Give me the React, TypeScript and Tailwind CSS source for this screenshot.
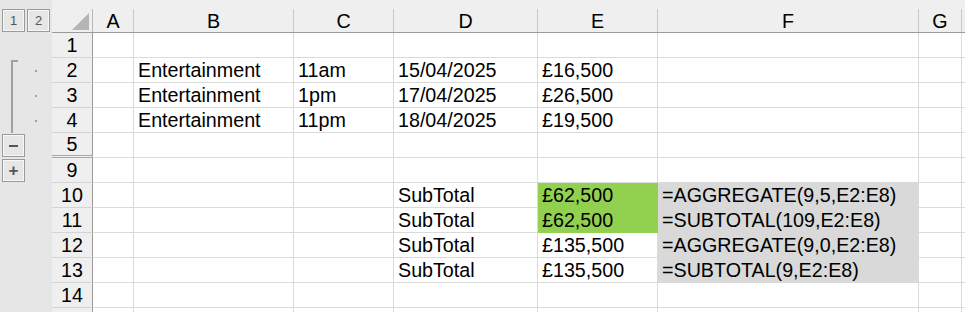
import React from 'react';

type Col = { key: string; w: string };

const cols: Col[] = [
    { key: 'A', w: 'w-[41px]' },
    { key: 'B', w: 'w-[160px]' },
    { key: 'C', w: 'w-[100px]' },
    { key: 'D', w: 'w-[144px]' },
    { key: 'E', w: 'w-[120px]' },
    { key: 'F', w: 'w-[261px]' },
    { key: 'G', w: 'w-[43px]' },
];

type Row = {
    n: number;
    cells?: Record<string, string>;
    fill?: Record<string, string>;
    outline?: 'first' | 'mid' | 'minus' | 'plus';
    hiddenBelow?: boolean;
    label?: boolean;
};

const GREEN = 'bg-[#92d050] border-[#92d050]';
const GREY = 'bg-[#d9d9d9] border-[#d9d9d9]';

const rows: Row[] = [
    { n: 1 },
    { n: 2, outline: 'first', cells: { B: 'Entertainment', C: '11am', D: '15/04/2025', E: '£16,500' } },
    { n: 3, outline: 'mid', cells: { B: 'Entertainment', C: '1pm', D: '17/04/2025', E: '£26,500' } },
    { n: 4, outline: 'mid', cells: { B: 'Entertainment', C: '11pm', D: '18/04/2025', E: '£19,500' } },
    { n: 5, outline: 'minus', hiddenBelow: true },
    { n: 9, outline: 'plus' },
    { n: 10, cells: { D: 'SubTotal', E: '£62,500', F: '=AGGREGATE(9,5,E2:E8)' }, fill: { E: GREEN, F: GREY } },
    { n: 11, cells: { D: 'SubTotal', E: '£62,500', F: '=SUBTOTAL(109,E2:E8)' }, fill: { E: GREEN, F: GREY } },
    { n: 12, cells: { D: 'SubTotal', E: '£135,500', F: '=AGGREGATE(9,0,E2:E8)' }, fill: { F: GREY } },
    { n: 13, cells: { D: 'SubTotal', E: '£135,500', F: '=SUBTOTAL(9,E2:E8)' }, fill: { F: GREY } },
    { n: 14 },
    // only the top edge of row 15 is in view
    { n: 15, label: false },
];

const LevelButton = ({ children }: { children: React.ReactNode }) => (
    <div className="w-[23px] h-[23px] flex items-center justify-center border border-[#9a9a9a] shadow-[inset_0_0_0_1px_#f7f7f7] text-[13px] text-[#555] leading-none">
        {children}
    </div>
);

const Outline = ({ kind }: { kind?: Row['outline'] }) => {
    if (kind === 'first' || kind === 'mid') {
        return (
            <div className="flex w-[52px] shrink-0 bg-[#e6e6e6]">
                {kind === 'first' ? (
                    <div className="ml-[11px] mt-[2px] w-[7px] border-l-2 border-t-2 border-[#a0a0a0]" />
                ) : (
                    <div className="ml-[11px] w-[7px] border-l-2 border-[#a0a0a0]" />
                )}
                <div className="ml-[17px] mt-[12px] w-[2px] h-[2px] bg-[#a0a0a0]" />
            </div>
        );
    }
    if (kind === 'minus' || kind === 'plus') {
        return (
            <div className="w-[52px] shrink-0 bg-[#e6e6e6] pl-[2px] pt-[1px]">
                <LevelButton>
                    {kind === 'minus' ? (
                        <div className="w-[9px] h-[2px] bg-[#555]" />
                    ) : (
                        <span className="text-[17px] font-bold text-[#555] leading-none">+</span>
                    )}
                </LevelButton>
            </div>
        );
    }
    return <div className="w-[52px] shrink-0 bg-[#e6e6e6]" />;
};

export default function App() {
    return (
        <div
            className="w-[965px] h-[312px] overflow-hidden bg-white text-black text-[19.7px]"
            style={{ fontFamily: '"Liberation Sans", Arial, sans-serif' }}
        >
            {/* column header row */}
            <div className="flex h-[33px]">
                <div className="w-[52px] shrink-0 bg-[#e6e6e6] flex gap-[2px] pl-[2px] pt-[9px]">
                    <LevelButton>1</LevelButton>
                    <LevelButton>2</LevelButton>
                </div>
                <div className="flex flex-1 bg-[#efefef] border-b border-[#9b9b9b]">
                    <div className="w-[41px] shrink-0 mt-[9px] border-r border-[#b8b8b8] flex items-end justify-end">
                        <svg width="18" height="18" viewBox="0 0 18 18" className="mr-[2px] mb-[1px]">
                            <polygon points="17,0 17,17 0,17" fill="#b4b4b4" />
                        </svg>
                    </div>
                    {cols.map((c) => (
                        <div
                            key={c.key}
                            className={`${c.w} shrink-0 mt-[9px] pt-[2px] border-r border-[#c8c8c8] flex items-center justify-center leading-none`}
                        >
                            {c.key}
                        </div>
                    ))}
                    <div className="flex-1" />
                </div>
            </div>

            {rows.map((r) => (
                <div key={r.n} className="flex h-[25px]">
                    <Outline kind={r.outline} />
                    <div
                        className={`w-[41px] shrink-0 bg-[#efefef] pt-[2px] border-r border-r-[#9b9b9b] flex items-center justify-center ${
                            r.hiddenBelow ? 'border-b-[3px] border-double border-b-[#a8a8a8]' : 'border-b border-b-[#d4d4d4]'
                        }`}
                    >
                        {r.label === false ? '' : r.n}
                    </div>
                    {cols.map((c) => {
                        const fill = r.fill?.[c.key];
                        return (
                            <div
                                key={c.key}
                                className={`${c.w} shrink-0 border-r border-b ${fill ?? 'border-[#dadada]'} flex items-center pl-[4px] pt-[2px] whitespace-nowrap`}
                            >
                                {r.cells?.[c.key] ?? ''}
                            </div>
                        );
                    })}
                    <div className="flex-1 border-b border-[#dadada]" />
                </div>
            ))}
        </div>
    );
}
